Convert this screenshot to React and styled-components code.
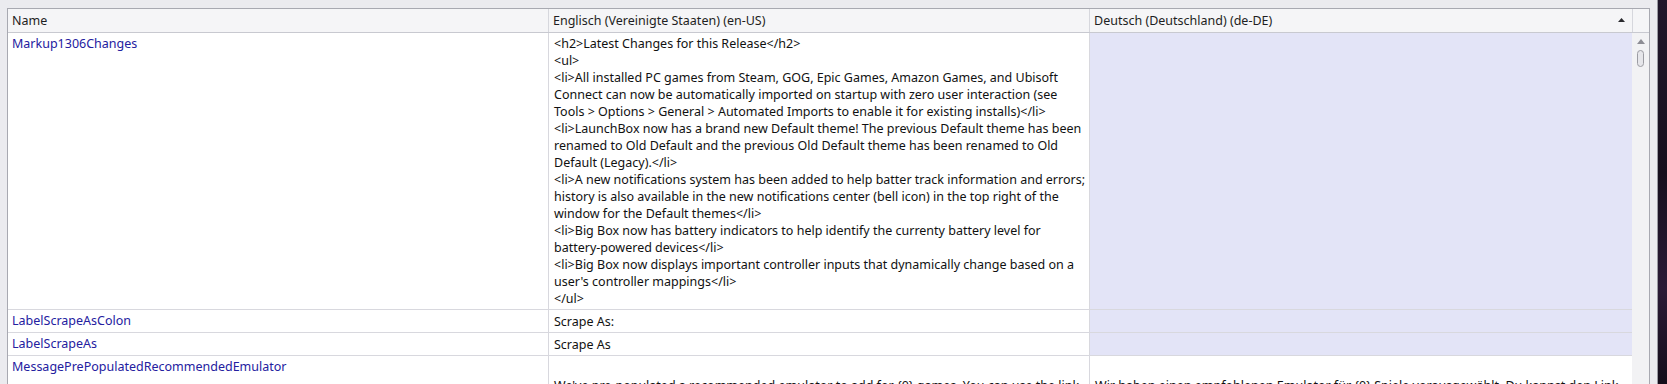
import React from "react";
import styled, { createGlobalStyle } from "styled-components";

const GlobalStyle = createGlobalStyle`
  html, body {
    margin: 0;
    padding: 0;
    height: 384px;
    overflow: hidden;
    background: #1b1422;
  }
  body {
    font-family: "Noto Sans", "Open Sans", sans-serif;
    font-size: 12.5px;
    color: #111111;
  }
`;

const markupLines = [
  "<h2>Latest Changes for this Release</h2>",
  "<ul>",
  "<li>All installed PC games from Steam, GOG, Epic Games, Amazon Games, and Ubisoft",
  "Connect can now be automatically imported on startup with zero user interaction (see",
  "Tools > Options > General > Automated Imports to enable it for existing installs)</li>",
  "<li>LaunchBox now has a brand new Default theme! The previous Default theme has been",
  "renamed to Old Default and the previous Old Default theme has been renamed to Old",
  "Default (Legacy).</li>",
  "<li>A new notifications system has been added to help batter track information and errors;",
  "history is also available in the new notifications center (bell icon) in the top right of the",
  "window for the Default themes</li>",
  "<li>Big Box now has battery indicators to help identify the currenty battery level for",
  "battery-powered devices</li>",
  "<li>Big Box now displays important controller inputs that dynamically change based on a",
  "user's controller mappings</li>",
  "</ul>",
];

const rows = [
  { name: "Markup1306Changes", en: markupLines.join("\n"), de: "" },
  { name: "LabelScrapeAsColon", en: "Scrape As:", de: "" },
  { name: "LabelScrapeAs", en: "Scrape As", de: "" },
  {
    name: "MessagePrePopulatedRecommendedEmulator",
    en: [
      "We've pre-populated a recommended emulator to add for {0} games. You can use the link",
      "below to review or change the emulator before continuing.",
    ].join("\n"),
    de: [
      "Wir haben einen empfohlenen Emulator für {0} Spiele vorausgewählt. Du kannst den Link",
      "unten verwenden, um den Emulator vor dem Fortfahren zu ändern.",
    ].join("\n"),
    minHeight: 76,
  },
];

function App() {
  return (
    <>
      <GlobalStyle />
      <Screen>
        <Window>
          <Grid>
            <Header>
              <HeaderCell>Name</HeaderCell>
              <HeaderCell>Englisch (Vereinigte Staaten) (en-US)</HeaderCell>
              <HeaderCell>
                Deutsch (Deutschland) (de-DE)
                <svg width="7" height="4" viewBox="0 0 7 4">
                  <path d="M0 4 L3.5 0 L7 4 Z" fill="#2a2a2e" />
                </svg>
              </HeaderCell>
              <HeaderCell $last />
            </Header>
            <Body>
              <Rows>
                {rows.map((row) => (
                  <Row key={row.name} $minHeight={row.minHeight}>
                    <NameCell>{row.name}</NameCell>
                    <ValueCell $divider>
                      <CellText>{row.en}</CellText>
                    </ValueCell>
                    <ValueCell $missing={!row.de}>
                      <CellText>{row.de}</CellText>
                    </ValueCell>
                  </Row>
                ))}
              </Rows>
              <ScrollBar>
                <svg width="8" height="5" viewBox="0 0 8 5">
                  <path d="M0 5 L4 0 L8 5 Z" fill="#8d8d94" />
                </svg>
                <Thumb />
              </ScrollBar>
            </Body>
          </Grid>
        </Window>
        <Desktop />
      </Screen>
    </>
  );
}

const Screen = styled.div`
  display: flex;
  width: 1667px;
  height: 384px;
  overflow: hidden;
`;

const Window = styled.div`
  flex: 0 0 1658px;
  box-sizing: border-box;
  display: flex;
  flex-direction: column;
  padding: 8px 7px 0 7px;
  background: #ebebef;
  border-right: 1px solid #9a9aa2;
`;

const Desktop = styled.div`
  flex: 1;
  background: linear-gradient(180deg, #21172b 0%, #160f1d 45%, #2a1a36 75%, #140d1a 100%);
`;

const Grid = styled.div`
  flex: 1;
  display: flex;
  flex-direction: column;
  border: 1px solid #a8a9b1;
  border-bottom: none;
  background: #ffffff;
  min-height: 0;
`;

const Header = styled.div`
  display: grid;
  grid-template-columns: 541px 541px 543px 16px;
  height: 23px;
  background: #f5f5f7;
  border-bottom: 1px solid #c8c9d0;
`;

const HeaderCell = styled.div`
  box-sizing: border-box;
  display: flex;
  align-items: center;
  justify-content: space-between;
  padding: 0 7px 1px 4px;
  border-right: ${(p) => (p.$last ? "none" : "1px solid #d6d7dd")};
  color: #1e1e22;
  white-space: nowrap;
`;

const Body = styled.div`
  flex: 1;
  display: flex;
  min-height: 0;
`;

const Rows = styled.div`
  width: 1624px;
  display: flex;
  flex-direction: column;
`;

const Row = styled.div`
  display: grid;
  grid-template-columns: 541px 541px 542px;
  min-height: ${(p) => p.$minHeight || 22}px;
  border-bottom: 1px solid #d8d8de;
  flex-shrink: 0;
`;

const NameCell = styled.div`
  box-sizing: border-box;
  padding: 2px 4px;
  line-height: 17px;
  color: #2420a0;
  border-right: 1px solid #d8d8de;
  white-space: nowrap;
`;

const ValueCell = styled.div`
  box-sizing: border-box;
  display: flex;
  align-items: center;
  padding: 2px 5px;
  overflow: hidden;
  background: ${(p) => (p.$missing ? "#e3e4f7" : "#ffffff")};
  border-right: ${(p) => (p.$divider ? "1px solid #d8d8de" : "none")};
`;

const CellText = styled.div`
  line-height: 17px;
  white-space: pre;
  color: #111111;
`;

const ScrollBar = styled.div`
  width: 17px;
  display: flex;
  flex-direction: column;
  align-items: center;
  padding-top: 6px;
  gap: 6px;
  background: #f2f2f4;
`;

const Thumb = styled.div`
  box-sizing: border-box;
  width: 7px;
  height: 17px;
  border: 1px solid #9c9ca3;
  border-radius: 4px;
  background: #e6e6ea;
`;

export default App;
